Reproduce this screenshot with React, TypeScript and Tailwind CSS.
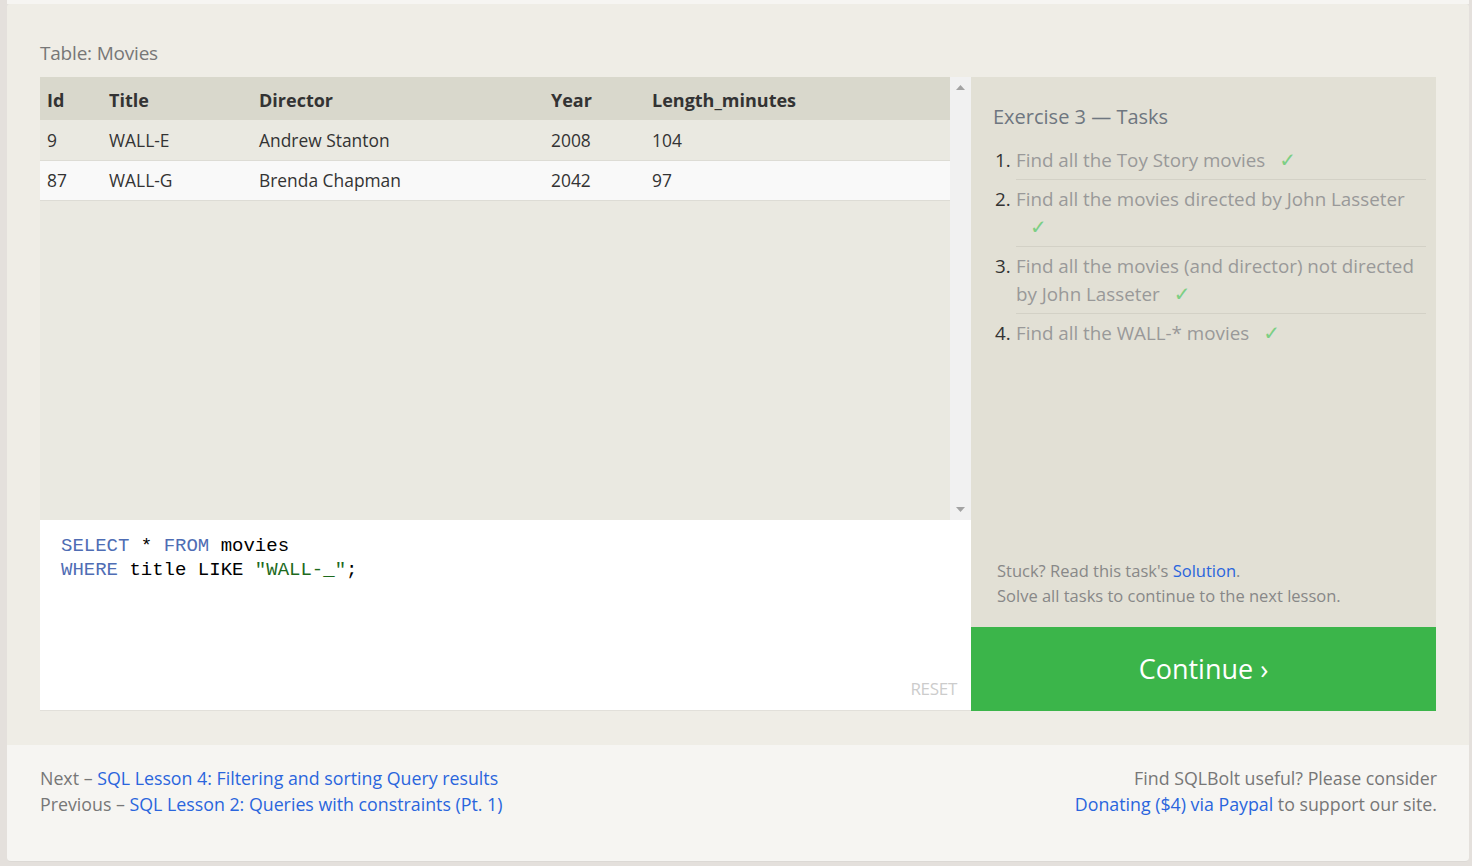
import React from 'react';

const rows = [
  { id: 9, title: 'WALL-E', director: 'Andrew Stanton', year: 2008, length: 104 },
  { id: 87, title: 'WALL-G', director: 'Brenda Chapman', year: 2042, length: 97 },
];

const tasks = [
  'Find all the Toy Story movies',
  'Find all the movies directed by John Lasseter',
  'Find all the movies (and director) not directed by John Lasseter',
  'Find all the WALL-* movies',
];

const font = { fontFamily: '"Open Sans", "Noto Sans", sans-serif' };

const App = () => {
  return (
    <div className="min-h-screen bg-[#e4e0dc] pl-[7px] pr-[3px] text-[#333]" style={font}>
      <div className="h-[4px] bg-[#f6f5f2]" />
      <div className="bg-[#efede6] px-[33px] pt-[36px] pb-[34px] rounded-t-[3px]">
        {/* Table title */}
        <div className="text-[19px] leading-[26px] text-[#777] mb-[11px] tracking-[-0.2px]">Table: Movies</div>

        <div className="flex">
          {/* Left: results + editor */}
          <div className="w-[931px] flex flex-col">
            <div className="h-[443px] flex bg-[#eae9e1]">
              <div className="flex-1">
                <table className="w-full border-collapse text-left">
                  <thead>
                    <tr className="bg-[#d9d8cc] h-[43px]">
                      <th className="w-[62px] pl-[7px] pt-[3px] text-[18px] font-bold">Id</th>
                      <th className="w-[150px] pl-[7px] pt-[3px] text-[18px] font-bold">Title</th>
                      <th className="w-[292px] pl-[7px] pt-[3px] text-[18px] font-bold">Director</th>
                      <th className="w-[101px] pl-[7px] pt-[3px] text-[18px] font-bold">Year</th>
                      <th className="pl-[7px] pt-[3px] text-[18px] font-bold">Length_minutes</th>
                    </tr>
                  </thead>
                  <tbody>
                    {rows.map((r, i) => (
                      <tr
                        key={r.id}
                        className={`h-[40px] border-b border-[#dddcd5] text-[17.4px] ${
                          i === 0 ? 'bg-[#eae9e1]' : 'bg-[#f9f9f9]'
                        }`}
                      >
                        <td className="pl-[7px]">{r.id}</td>
                        <td className="pl-[7px]">{r.title}</td>
                        <td className="pl-[7px]">{r.director}</td>
                        <td className="pl-[7px]">{r.year}</td>
                        <td className="pl-[7px]">{r.length}</td>
                      </tr>
                    ))}
                  </tbody>
                </table>
              </div>
              {/* Scrollbar */}
              <div className="w-[21px] bg-[#f1f1f1] flex flex-col justify-between items-center py-[8px]">
                <svg width="9" height="5" viewBox="0 0 9 5">
                  <polygon points="4.5,0 9,5 0,5" fill="#a3a3a3" />
                </svg>
                <svg width="9" height="5" viewBox="0 0 9 5">
                  <polygon points="0,0 9,0 4.5,5" fill="#a3a3a3" />
                </svg>
              </div>
            </div>

            {/* Editor */}
            <div className="h-[191px] bg-white border-b border-[#e2e0da] pl-[21px] pt-[14px] pr-[14px] flex flex-col">
              <pre
                className="text-[19px] leading-[24px] text-black"
                style={{ fontFamily: '"Liberation Mono", "DejaVu Sans Mono", monospace' }}
              >
                <span className="text-[#4f6db4]">SELECT</span> * <span className="text-[#4f6db4]">FROM</span> movies
                {'\n'}
                <span className="text-[#4f6db4]">WHERE</span> title LIKE <span className="text-[#1d6a1d]">"WALL-_"</span>;
              </pre>
              <div className="mt-auto mb-[9px] self-end text-[17px] text-[#cccccc] tracking-[-0.3px]">RESET</div>
            </div>
          </div>

          {/* Right: tasks */}
          <div className="w-[465px] flex flex-col">
            <div className="flex-1 bg-[#e2e0d5] pl-[22px] pr-[10px] pt-[26px] pb-[19px] flex flex-col">
              <div className="text-[20px] leading-[28px] text-[#6e7680] mb-[10px]">Exercise 3 — Tasks</div>
              <ol className="pl-[23px]">
                {tasks.map((t, i) => (
                  <li
                    key={i}
                    className={`relative py-[5px] text-[18.8px] leading-[28px] text-[#999] ${
                      i < tasks.length - 1 ? 'border-b border-[#d3d1c6]' : ''
                    }`}
                  >
                    <span className="absolute -left-[21px] text-[#333]">{i + 1}.</span>
                    {t}
                    <span
                      className="inline-block ml-[14px] text-[20px] leading-none text-[#7ccf84]"
                      style={{ fontFamily: '"DejaVu Sans", sans-serif' }}
                    >
                      ✓
                    </span>
                  </li>
                ))}
              </ol>
              <div className="mt-auto pl-[4px] text-[16.5px] leading-[25px] text-[#888]">
                <div>
                  Stuck? Read this task's <span className="text-[#2a65dd]">Solution</span>.
                </div>
                <div>Solve all tasks to continue to the next lesson.</div>
              </div>
            </div>
            <div className="h-[84px] bg-[#3bb54a] flex items-center justify-center text-white text-[27px]">
              Continue ›
            </div>
          </div>
        </div>
      </div>

      {/* Footer */}
      <div className="h-[117px] bg-[#f6f5f2] rounded-b-[4px] border-b border-[#dcd9d5] pl-[33px] pr-[32px] pt-[20px] flex justify-between text-[17.8px] leading-[26px] text-[#777]">
        <div>
          <div>
            Next – <span className="text-[#2a65dd]">SQL Lesson 4: Filtering and sorting Query results</span>
          </div>
          <div>
            Previous – <span className="text-[#2a65dd]">SQL Lesson 2: Queries with constraints (Pt. 1)</span>
          </div>
        </div>
        <div className="text-right">
          <div>Find SQLBolt useful? Please consider</div>
          <div>
            <span className="text-[#2a65dd]">Donating ($4) via Paypal</span> to support our site.
          </div>
        </div>
      </div>
    </div>
  );
};

export default App;
